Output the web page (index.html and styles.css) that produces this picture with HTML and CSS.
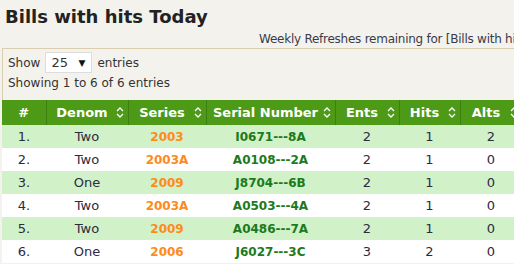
FILE: index.html
```html
<!DOCTYPE html>
<html>
<head>
<meta charset="utf-8">
<link rel="stylesheet" href="styles.css">
</head>
<body>
<h1 class="title">Bills with hits Today</h1>
<div class="refresh">Weekly Refreshes remaining for [Bills with hits Today]: 5</div>
<div class="panel">
  <div class="controls">
    <div class="length">Show <span class="select">25 <span class="arrow">▼</span></span> entries</div>
    <div class="info">Showing 1 to 6 of 6 entries</div>
  </div>
  <table class="bills">
    <thead>
      <tr>
        <th class="c-num">#</th>
        <th class="c-denom sort">Denom<svg class="sorter" viewBox="0 0 8 13" width="8" height="13"><polyline points="1,5 4,2 7,5"/><polyline points="1,8 4,11 7,8"/></svg></th>
        <th class="c-series sort">Series<svg class="sorter" viewBox="0 0 8 13" width="8" height="13"><polyline points="1,5 4,2 7,5"/><polyline points="1,8 4,11 7,8"/></svg></th>
        <th class="c-serial sort">Serial Number<svg class="sorter" viewBox="0 0 8 13" width="8" height="13"><polyline points="1,5 4,2 7,5"/><polyline points="1,8 4,11 7,8"/></svg></th>
        <th class="c-ents sort">Ents<svg class="sorter" viewBox="0 0 8 13" width="8" height="13"><polyline points="1,5 4,2 7,5"/><polyline points="1,8 4,11 7,8"/></svg></th>
        <th class="c-hits sort">Hits<svg class="sorter" viewBox="0 0 8 13" width="8" height="13"><polyline points="1,5 4,2 7,5"/><polyline points="1,8 4,11 7,8"/></svg></th>
        <th class="c-alts sort">Alts<svg class="sorter" viewBox="0 0 8 13" width="8" height="13"><polyline points="1,5 4,2 7,5"/><polyline points="1,8 4,11 7,8"/></svg></th>
      </tr>
    </thead>
    <tbody>
      <tr class="odd"><td>1.</td><td>Two</td><td class="series">2003</td><td class="serial">I0671---8A</td><td>2</td><td>1</td><td>2</td></tr>
      <tr class="even"><td>2.</td><td>Two</td><td class="series">2003A</td><td class="serial">A0108---2A</td><td>2</td><td>1</td><td>0</td></tr>
      <tr class="odd"><td>3.</td><td>One</td><td class="series">2009</td><td class="serial">J8704---6B</td><td>2</td><td>1</td><td>0</td></tr>
      <tr class="even"><td>4.</td><td>Two</td><td class="series">2003A</td><td class="serial">A0503---4A</td><td>2</td><td>1</td><td>0</td></tr>
      <tr class="odd"><td>5.</td><td>Two</td><td class="series">2009</td><td class="serial">A0486---7A</td><td>2</td><td>1</td><td>0</td></tr>
      <tr class="even"><td>6.</td><td>One</td><td class="series">2006</td><td class="serial">J6027---3C</td><td>3</td><td>2</td><td>0</td></tr>
    </tbody>
  </table>
</div>
</body>
</html>
```
FILE: styles.css
```css
html, body {
  margin: 0;
  padding: 0;
  background: #f4f2ec;
  overflow: hidden;
}
body {
  font-family: "DejaVu Sans", Verdana, sans-serif;
  font-size: 12px;
  color: #333;
  width: 540px;
}
.title {
  margin: 0;
  padding: 6px 0 0 5px;
  font-size: 18px;
  line-height: 22px;
  font-weight: bold;
  color: #222;
}
.refresh {
  padding: 3px 0 0 259px;
  line-height: 16px;
  white-space: nowrap;
  color: #3a3a4a;
  font-size: 12px;
  letter-spacing: -0.25px;
}
.panel {
  margin: 1px 0 0 2px;
  border-top: 1px solid #d9cfae;
  border-left: 1px solid #d9cfae;
}
.controls {
  padding: 3px 0 0 5px;
  height: 51px;
  box-sizing: border-box;
}
.length {
  display: flex;
  align-items: center;
  gap: 5px;
  height: 21px;
}
.select {
  display: inline-flex;
  justify-content: space-between;
  align-items: center;
  width: 47px;
  height: 21px;
  box-sizing: border-box;
  padding: 0 6px 0 5px;
  background: #fff;
  border: 1px solid #ddd;
  font-size: 13px;
}
.arrow { font-size: 9px; color: #111; }
.info {
  margin-top: 2px;
  line-height: 16px;
}
.bills {
  border-collapse: collapse;
  table-layout: fixed;
  width: 520px;
  margin-left: -1px;
}
.bills th {
  box-sizing: border-box;
  background: #4c9a16;
  color: #fff;
  font-weight: bold;
  height: 25px;
  padding: 0;
  border-right: 1px solid #3d7f10;
  font-size: 13px;
  position: relative;
}
.bills th.sort { padding-right: 10px; }
.sorter {
  position: absolute;
  right: 4px;
  top: 6px;
  fill: none;
  stroke: #fff;
  stroke-width: 1.3;
}
.c-num { width: 44px; }
.c-denom { width: 82px; }
.c-series { width: 78px; }
.c-serial { width: 129px; }
.c-ents { width: 64px; }
.c-hits { width: 61px; }
.c-alts { width: 62px; }
.bills td {
  text-align: center;
  height: 23px;
  padding: 0;
  color: #2e2a40;
  font-size: 13px;
}
.bills tr.odd td { background: #d1f1c8; }
.bills tr.even td { background: #fff; }
.bills td.series { color: #ff8a1c; font-weight: bold; font-size: 12px; }
.bills td.serial { color: #1c7a1c; font-weight: bold; font-size: 12px; }
```
